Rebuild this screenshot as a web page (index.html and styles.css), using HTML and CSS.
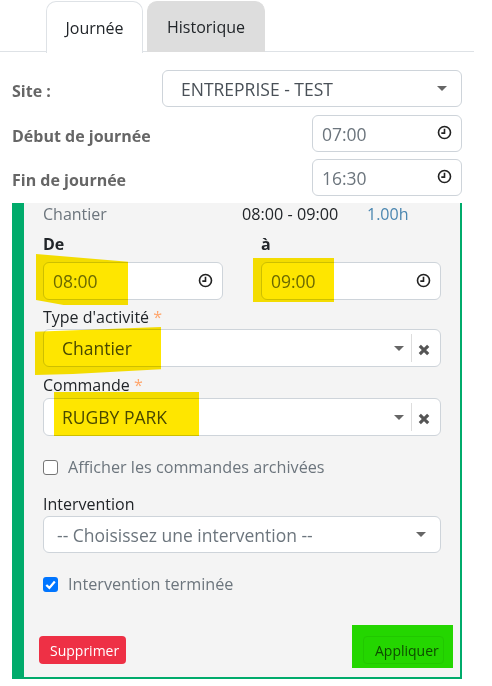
FILE: index.html
```html
<!DOCTYPE html>
<html lang="fr">
<head>
    <meta charset="UTF-8">
    <meta name="viewport" content="width=device-width, initial-scale=1.0">
    <title>Journée</title>
    <link rel="stylesheet" href="styles.css">
</head>
<body>
    <div class="page">
        <div class="tab">
            <button class="tablinks active">Journée</button>
            <button class="tablinks">Historique</button>
        </div>

        <div class="day-row site-row">
            <label class="day-label">Site :</label>
            <div class="field site-select">
                <span class="value">ENTREPRISE - TEST</span>
                <span class="caret"></span>
            </div>
        </div>
        <div class="day-row">
            <label class="day-label">Début de journée</label>
            <div class="field time-small">
                <span class="value muted">07:00</span>
                <svg class="clock" viewBox="0 0 14 14"><circle cx="7" cy="7" r="5.6"/><path d="M7 3.6V7.6H4"/></svg>
            </div>
        </div>
        <div class="day-row">
            <label class="day-label">Fin de journée</label>
            <div class="field time-small">
                <span class="value muted">16:30</span>
                <svg class="clock" viewBox="0 0 14 14"><circle cx="7" cy="7" r="5.6"/><path d="M7 3.6V7.6H4"/></svg>
            </div>
        </div>

        <!-- Selected activity card -->
        <div class="card">
            <div class="card-head">
                <span class="head-name">Chantier</span>
                <span class="head-time">08:00 - 09:00</span>
                <span class="head-hours">1.00h</span>
            </div>

            <div class="time-grid">
                <div>
                    <label class="strong">De</label>
                    <div class="field">
                        <span class="value muted">08:00</span>
                        <svg class="clock" viewBox="0 0 14 14"><circle cx="7" cy="7" r="5.6"/><path d="M7 3.6V7.6H4"/></svg>
                    </div>
                </div>
                <div>
                    <label class="strong">à</label>
                    <div class="field">
                        <span class="value muted">09:00</span>
                        <svg class="clock" viewBox="0 0 14 14"><circle cx="7" cy="7" r="5.6"/><path d="M7 3.6V7.6H4"/></svg>
                    </div>
                </div>
            </div>

            <label class="plain type-label">Type d'activité <span class="req">*</span></label>
            <div class="field combo">
                <span class="value">Chantier</span>
                <span class="caret"></span>
                <span class="clear"><svg viewBox="0 0 10 10"><path d="M1.5 1.5L8.5 8.5M8.5 1.5L1.5 8.5"/></svg></span>
            </div>

            <label class="plain order-label">Commande <span class="req">*</span></label>
            <div class="field combo">
                <span class="value">RUGBY PARK</span>
                <span class="caret"></span>
                <span class="clear"><svg viewBox="0 0 10 10"><path d="M1.5 1.5L8.5 8.5M8.5 1.5L1.5 8.5"/></svg></span>
            </div>

            <div class="check-row archived">
                <span class="box"></span>
                <span>Afficher les commandes archivées</span>
            </div>

            <label class="plain job-label">Intervention</label>
            <div class="field job-select">
                <span class="value muted">-- Choisissez une intervention --</span>
                <span class="caret"></span>
            </div>

            <div class="check-row done">
                <span class="box checked"><svg viewBox="0 0 16 16"><path d="M3.5 8.5L6.8 11.6L12.6 4.8"/></svg></span>
                <span>Intervention terminée</span>
            </div>

            <div class="actions">
                <button class="btn-delete">Supprimer</button>
                <button class="btn-apply">Appliquer</button>
            </div>
        </div>

        <!-- Highlighter marks drawn over the form -->
        <div class="mark mark-from"></div>
        <div class="mark mark-to"></div>
        <div class="mark mark-type"></div>
        <div class="mark mark-order"></div>
        <div class="mark mark-apply"></div>
    </div>
</body>
</html>
```

FILE: styles.css
```css
* {
    box-sizing: border-box;
}

body {
    margin: 0;
    background-color: #fff;
    font-family: "Open Sans", sans-serif;
    font-size: 16px;
    color: #212529;
}

.page {
    position: relative;
    width: 492px;
    height: 686px;
    overflow: hidden;
}

/* Tabs */
.tab {
    display: flex;
    gap: 4px;
    width: 474px;
    height: 52px;
    padding: 1px 0 0 46px;
    border-bottom: 1px solid #dee2e6;
}

.tab button {
    width: 97px;
    height: 51px;
    padding: 0;
    border: 1px solid #dee2e6;
    border-bottom: none;
    border-radius: 10px 10px 0 0;
    background-color: #ddd;
    font: inherit;
    color: #212529;
}

.tab button.active {
    height: 52px;
    background-color: #fff;
}

.tab button:last-child {
    width: 118px;
    border-color: #ddd;
}

/* Day settings */
.day-row {
    display: flex;
    justify-content: space-between;
    align-items: center;
    width: 450px;
    height: 37px;
    margin: 7px 0 0 12px;
}

.site-row {
    margin-top: 18px;
    margin-bottom: 8px;
}

.day-label {
    font-weight: 700;
    color: #666;
    padding-top: 5px;
}

.field {
    display: flex;
    align-items: center;
    height: 38px;
    padding: 0 9px 0 9px;
    border: 1px solid #ced4da;
    border-radius: 6px;
    background-color: #fff;
}

.value {
    flex-grow: 1;
    font-size: 17.5px;
    color: #495057;
    white-space: nowrap;
}

.value.muted {
    color: #6c757d;
}

.site-select {
    width: 300px;
    height: 37px;
    padding: 0 14px 0 18px;
}

.time-small {
    width: 150px;
    height: 37px;
}

.clock {
    width: 15px;
    height: 15px;
    margin-top: -2px;
    fill: none;
    stroke: #222;
    stroke-width: 1.5;
}

.caret {
    width: 0;
    height: 0;
    border-left: 5px solid transparent;
    border-right: 5px solid transparent;
    border-top: 5px solid #666;
}

/* Card */
.card {
    width: 450px;
    height: 476px;
    margin: 7px 0 0 12px;
    padding: 0 19px;
    border-left: 12px solid #00ab6b;
    border-right: 2px solid #00ab6b;
    border-bottom: 2px solid #00ab6b;
    background-color: #f4f4f4;
}

.card-head {
    display: flex;
    height: 22px;
    align-items: center;
}

.head-name {
    width: 199px;
    color: #6c757d;
}

.head-time {
    width: 125px;
    font-size: 16.2px;
    color: #212529;
}

.head-hours {
    color: #4a86b0;
}

.time-grid {
    display: grid;
    grid-template-columns: 180px 180px;
    gap: 38px;
    margin-top: 7px;
}

.strong {
    display: block;
    height: 30px;
    font-weight: 700;
    line-height: 24px;
    color: #212529;
}

.plain {
    display: block;
    line-height: 24px;
    color: #212529;
}

.type-label {
    margin-top: 5px;
    height: 24px;
}

.order-label {
    margin-top: 6px;
    height: 25px;
}

.job-label {
    margin-top: 13px;
    height: 24px;
}

.req {
    color: #ffa56b;
}

.combo {
    height: 38px;
    padding: 0 10px 0 18px;
}

.combo .caret {
    margin-right: 7px;
}

.clear {
    display: flex;
    justify-content: center;
    align-items: center;
    height: 28px;
    padding: 4px 0 0 6px;
    border-left: 1px solid #ddd;
}

.clear svg {
    width: 12px;
    height: 12px;
    fill: none;
    stroke: #555;
    stroke-width: 2.6;
}

.job-select {
    height: 37px;
    padding: 0 14px 0 13px;
}

.check-row {
    display: flex;
    align-items: center;
    gap: 10px;
    height: 24px;
    font-size: 16.2px;
    color: #6c757d;
}

.archived {
    margin-top: 19px;
}

.done {
    margin-top: 19px;
}

.box {
    display: block;
    width: 15px;
    height: 15px;
    border: 1px solid #767676;
    border-radius: 3px;
    background-color: #fff;
}

.box.checked {
    border: none;
    background-color: #0075ff;
}

.box svg {
    display: block;
    fill: none;
    stroke: #fff;
    stroke-width: 2.4;
}

.actions {
    display: flex;
    justify-content: space-between;
    margin: 40px 0 0 -4px;
    width: 405px;
}

.actions button {
    height: 28px;
    padding: 0 0 0 11px;
    border-radius: 4px;
    font: inherit;
    font-size: 14px;
    text-align: left;
}

.btn-delete {
    width: 87px;
    border: none;
    background-color: #ee3045;
    color: #fff;
}

.btn-apply {
    width: 81px;
    border: 1px solid #e4e4e4;
    background-color: transparent;
    color: #555;
}

/* Highlighter marks */
.mark {
    position: absolute;
    mix-blend-mode: multiply;
    background-color: #fee600;
}

.mark-from {
    left: 36px;
    top: 254px;
    width: 92px;
    height: 51px;
    clip-path: polygon(0 0, 100% 15%, 100% 100%, 30% 100%, 0 90%);
}

.mark-to {
    left: 253px;
    top: 258px;
    width: 81px;
    height: 44px;
}

.mark-type {
    left: 35px;
    top: 327px;
    width: 126px;
    height: 48px;
    clip-path: polygon(0 10%, 100% 0, 100% 88%, 30% 98%, 0 100%);
}

.mark-order {
    left: 54px;
    top: 392px;
    width: 145px;
    height: 44px;
}

.mark-apply {
    left: 352px;
    top: 625px;
    width: 101px;
    height: 43px;
    background-color: #25e000;
}
```
